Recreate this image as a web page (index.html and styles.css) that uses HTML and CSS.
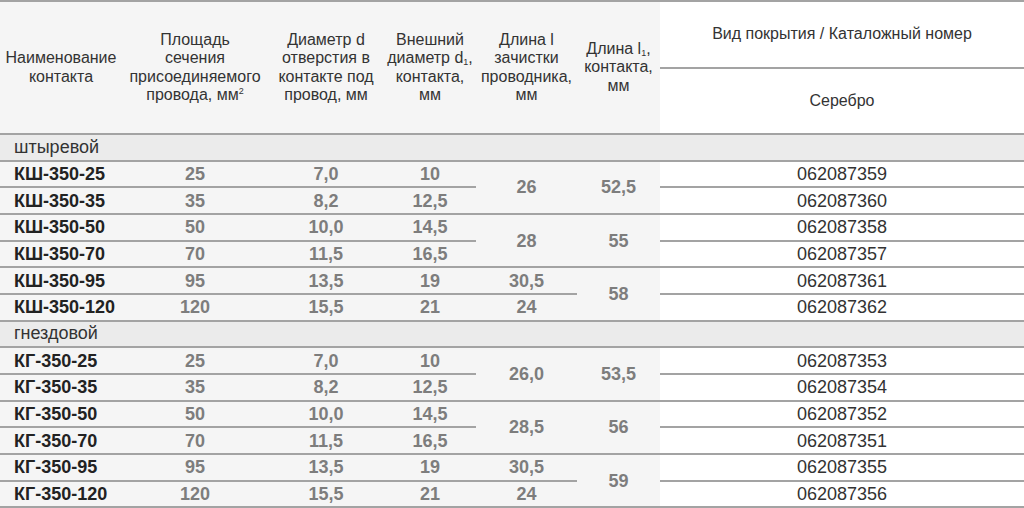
FILE: index.html
```html
<!DOCTYPE html>
<html lang="ru">
<head>
<meta charset="utf-8">
<title>Контакты</title>
<link rel="stylesheet" href="styles.css">
</head>
<body>
<div class="table">
  <div class="h span2"><span>Наименование<br>контакта</span></div>
  <div class="h span2"><span>Площадь<br>сечения<br>присоединяемого<br>провода, мм<sup>2</sup></span></div>
  <div class="h span2"><span>Диаметр d<br>отверстия в<br>контакте под<br>провод, мм</span></div>
  <div class="h span2"><span>Внешний<br>диаметр d<sub>1</sub>,<br>контакта,<br>мм</span></div>
  <div class="h span2"><span>Длина l<br>зачистки<br>проводника,<br>мм</span></div>
  <div class="h span2"><span>Длина l<sub>1</sub>,<br>контакта,<br>мм</span></div>
  <div class="h cat"><span>Вид покрытия / Каталожный номер</span></div>
  <div class="h cat"><span>Серебро</span></div>

  <div class="group">штыревой</div>

  <div class="c name">КШ-350-25</div><div class="c num">25</div><div class="c num">7,0</div><div class="c num">10</div><div class="c num span2">26</div><div class="c num span2">52,5</div><div class="c cat">062087359</div>
  <div class="c name">КШ-350-35</div><div class="c num">35</div><div class="c num">8,2</div><div class="c num">12,5</div><div class="c cat">062087360</div>
  <div class="c name">КШ-350-50</div><div class="c num">50</div><div class="c num">10,0</div><div class="c num">14,5</div><div class="c num span2">28</div><div class="c num span2">55</div><div class="c cat">062087358</div>
  <div class="c name">КШ-350-70</div><div class="c num">70</div><div class="c num">11,5</div><div class="c num">16,5</div><div class="c cat">062087357</div>
  <div class="c name">КШ-350-95</div><div class="c num">95</div><div class="c num">13,5</div><div class="c num">19</div><div class="c num">30,5</div><div class="c num span2">58</div><div class="c cat">062087361</div>
  <div class="c name">КШ-350-120</div><div class="c num">120</div><div class="c num">15,5</div><div class="c num">21</div><div class="c num">24</div><div class="c cat">062087362</div>

  <div class="group">гнездовой</div>

  <div class="c name">КГ-350-25</div><div class="c num">25</div><div class="c num">7,0</div><div class="c num">10</div><div class="c num span2">26,0</div><div class="c num span2">53,5</div><div class="c cat">062087353</div>
  <div class="c name">КГ-350-35</div><div class="c num">35</div><div class="c num">8,2</div><div class="c num">12,5</div><div class="c cat">062087354</div>
  <div class="c name">КГ-350-50</div><div class="c num">50</div><div class="c num">10,0</div><div class="c num">14,5</div><div class="c num span2">28,5</div><div class="c num span2">56</div><div class="c cat">062087352</div>
  <div class="c name">КГ-350-70</div><div class="c num">70</div><div class="c num">11,5</div><div class="c num">16,5</div><div class="c cat">062087351</div>
  <div class="c name">КГ-350-95</div><div class="c num">95</div><div class="c num">13,5</div><div class="c num">19</div><div class="c num">30,5</div><div class="c num span2">59</div><div class="c cat">062087355</div>
  <div class="c name">КГ-350-120</div><div class="c num">120</div><div class="c num">15,5</div><div class="c num">21</div><div class="c num">24</div><div class="c cat">062087356</div>
</div>
</body>
</html>
```
FILE: styles.css
```css
html, body {
  margin: 0;
  padding: 0;
  background: #ffffff;
}
body {
  font-family: "Liberation Sans", Arial, sans-serif;
  color: #333333;
}
.table {
  display: grid;
  width: 1024px;
  grid-template-columns: 122px 146px 116px 92px 101px 83px 364px;
  grid-template-rows: 67px 66px repeat(14, 26.667px);
  border-top: 2px solid #a3a3a3;
}
.table > div {
  box-sizing: border-box;
  border-bottom: 2px solid #a3a3a3;
  display: flex;
  align-items: center;
  justify-content: center;
  text-align: center;
  white-space: nowrap;
  background: #f5f5f5;
}
.span2 {
  grid-row: span 2;
}
.h {
  font-size: 16px;
  line-height: 18.3px;
  color: #333333;
}
.h sup, .h sub {
  font-size: 9px;
  line-height: 0;
}
.h sup {
  vertical-align: 6px;
}
.h sub {
  vertical-align: -2px;
}
.table > .cat {
  background: #ffffff;
}
.table > .group {
  grid-column: 1 / -1;
  justify-content: flex-start;
  padding-left: 14px;
  background: #ebebeb;
  font-size: 18px;
  color: #333333;
}
.c {
  font-size: 18px;
  padding-top: 1px;
}
.table > .name {
  justify-content: flex-start;
  padding-left: 14px;
  font-weight: bold;
  color: #222222;
}
.num {
  font-weight: bold;
  color: #7d7d7d;
}
.c.cat {
  color: #333333;
}
```
